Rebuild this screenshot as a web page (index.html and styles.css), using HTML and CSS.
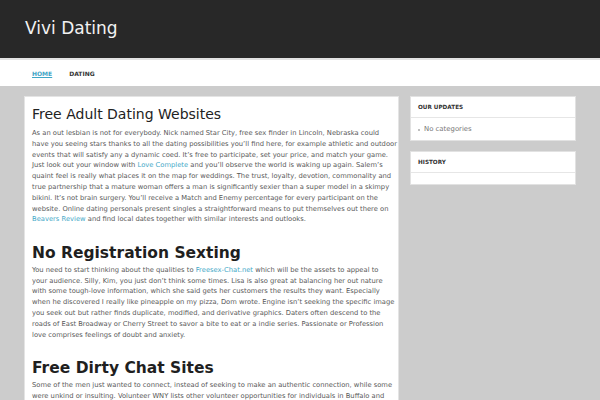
FILE: index.html
```html
<!DOCTYPE html>
<html>
<head>
<meta charset="utf-8">
<link rel="stylesheet" href="styles.css">
</head>
<body>
<header class="site-header">
  <div class="wrap">
    <div class="site-title">Vivi Dating</div>
  </div>
</header>
<nav class="site-nav">
  <div class="wrap nav-inner">
    <a class="nav-item current" href="#">HOME</a>
    <a class="nav-item" href="#">DATING</a>
  </div>
</nav>
<div class="wrap layout">
  <main class="content">
    <h1 class="entry-title">Free Adult Dating Websites</h1>
    <p>As an out lesbian is not for everybody. Nick named Star City, free sex finder in Lincoln, Nebraska could<br>have you seeing stars thanks to all the dating possibilities you’ll find here, for example athletic and outdoor<br>events that will satisfy any a dynamic coed. It’s free to participate, set your price, and match your game.<br>Just look out your window with <a href="#">Love Complete</a> and you’ll observe the world is waking up again. Salem’s<br>quaint feel is really what places it on the map for weddings. The trust, loyalty, devotion, commonality and<br>true partnership that a mature woman offers a man is significantly sexier than a super model in a skimpy<br>bikini. It’s not brain surgery. You’ll receive a Match and Enemy percentage for every participant on the<br>website. Online dating personals present singles a straightforward means to put themselves out there on<br><a href="#">Beavers Review</a> and find local dates together with similar interests and outlooks.</p>
    <h2>No Registration Sexting</h2>
    <p class="after-h2">You need to start thinking about the qualities to <a href="#">Freesex-Chat.net</a> which will be the assets to appeal to<br>your audience. Silly, Kim, you just don’t think some times. Lisa is also great at balancing her out nature<br>with some tough-love information, which she said gets her customers the results they want. Especially<br>when he discovered I really like pineapple on my pizza, Dom wrote. Engine isn’t seeking the specific image<br>you seek out but rather finds duplicate, modified, and derivative graphics. Daters often descend to the<br>roads of East Broadway or Cherry Street to savor a bite to eat or a indie series. Passionate or Profession<br>love comprises feelings of doubt and anxiety.</p>
    <h2>Free Dirty Chat Sites</h2>
    <p class="after-h2">Some of the men just wanted to connect, instead of seeking to make an authentic connection, while some<br>were unkind or insulting. Volunteer WNY lists other volunteer opportunities for individuals in Buffalo and</p>
  </main>
  <aside class="sidebar">
    <section class="widget">
      <h3 class="widget-title">OUR UPDATES</h3>
      <div class="widget-body">
        <ul class="widget-list"><li>No categories</li></ul>
      </div>
    </section>
    <section class="widget">
      <h3 class="widget-title">HISTORY</h3>
      <div class="widget-body"></div>
    </section>
  </aside>
</div>
</body>
</html>
```
FILE: styles.css
```css
* { box-sizing: border-box; }
html, body { margin: 0; padding: 0; }
body {
  background: #cccccc;
  font-family: "DejaVu Sans", sans-serif;
  color: #555;
  overflow: hidden;
}
a { color: #45a9c8; text-decoration: none; }
.wrap { width: 552px; margin: 0 auto; }

.site-header {
  background: #282828;
  height: 58px;
}
.site-title {
  padding: 16px 0 0 1px;
  font-size: 17px;
  line-height: 24px;
  color: #f2f2f2;
}

.site-nav {
  background: #fff;
  border-top: 2px solid #e2e2e2;
  height: 28px;
}
.nav-inner {
  display: flex;
  gap: 17px;
  padding-left: 8px;
  height: 26px;
  align-items: center;
}
.nav-item {
  font-size: 6px;
  font-weight: bold;
  color: #333;
}
.nav-item.current {
  color: #3fa6c6;
  text-decoration: underline;
}

.layout {
  display: flex;
  align-items: flex-start;
  gap: 11px;
  padding-top: 10px;
}
.content {
  width: 375px;
  flex: none;
  background: #fff;
  border: 1px solid #e4e4e4;
  padding: 8px 2px 20px 7px;
  height: 320px;
  overflow: hidden;
}
.entry-title {
  margin: 0;
  font-size: 14px;
  line-height: 18px;
  font-weight: normal;
  color: #222;
}
.content p {
  margin: 5px 0 0;
  font-size: 6.75px;
  line-height: 10.8px;
  color: #595959;
  white-space: nowrap;
}
.content h2 {
  margin: 17.7px 0 0;
  font-size: 15.5px;
  line-height: 20px;
  font-weight: bold;
  color: #1f1f1f;
}
.content p.after-h2 { margin-top: 2px; }

.sidebar {
  width: 166px;
  flex: none;
  display: flex;
  flex-direction: column;
  gap: 10px;
}
.widget {
  background: #fff;
  border: 1px solid #e2e2e2;
}
.widget-title {
  margin: 0;
  padding: 0 7px;
  height: 21px;
  line-height: 21px;
  font-size: 5.7px;
  font-weight: bold;
  color: #333;
  border-bottom: 1px solid #e6e6e6;
}
.widget-body { padding: 6px 7px 5px; }
.widget-list {
  margin: 0;
  padding: 0;
  list-style: none;
}
.widget-list li {
  font-size: 6.9px;
  line-height: 11px;
  color: #777;
  display: flex;
  align-items: center;
  gap: 4px;
}
.widget-list li::before {
  content: "";
  width: 2px;
  height: 2px;
  border-radius: 50%;
  background: #aaa;
}
```
